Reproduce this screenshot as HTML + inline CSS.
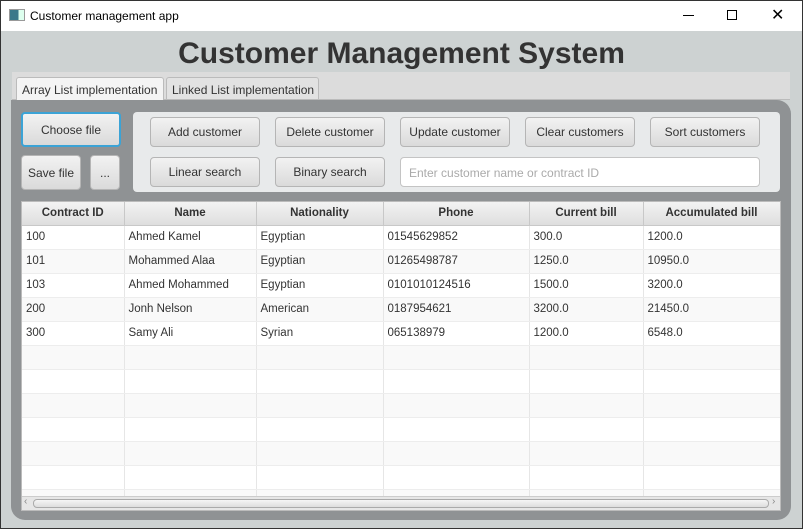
<!DOCTYPE html><html><head><style>
*{margin:0;padding:0;box-sizing:border-box}
body{width:803px;height:529px;overflow:hidden;font-family:"Liberation Sans",sans-serif;font-size:12px;color:#333;background:#cdd2d2;position:relative}
.abs{position:absolute}
.tb{left:0;top:0;width:803px;height:31px;background:#fff}
.btn{position:absolute;border:1px solid #b5b5b5;border-radius:4px;background:linear-gradient(#f2f2f2,#dadada);text-align:center;font-size:12px;color:#333;display:flex;align-items:center;justify-content:center;white-space:nowrap}
table{border-collapse:collapse;table-layout:fixed}
td,th{height:24px;border-right:1px solid #e6e6e6;padding:0 4px;text-align:left;font-weight:normal;font-size:11.5px;white-space:nowrap;overflow:hidden}
th{height:23px;text-align:center;font-weight:bold;background:linear-gradient(#f3f3f3,#dedede);border-right:1px solid #c8c8c8;border-bottom:1px solid #c8c8c8}
tr:nth-child(odd) td{background:#f9f9f9}
tr:nth-child(even) td{background:#fff}
td{border-bottom:1px solid #ededed}
</style></head><body>
<div class="abs tb"></div>
<div class="abs" style="left:0;top:0;width:803px;height:529px;border:1px solid #333;z-index:5;pointer-events:none"></div>
<div class="abs" style="left:9px;top:9px;width:16px;height:12px;border:1px solid #999;background:linear-gradient(90deg,#3a7a8a 0 60%,#dfe 60%)"></div>
<div class="abs" style="left:30px;top:9px;font-size:12px;color:#000">Customer management app</div>
<div class="abs" style="left:683px;top:15px;width:11px;height:1px;background:#000"></div>
<div class="abs" style="left:727px;top:10px;width:10px;height:10px;border:1px solid #000"></div>
<div class="abs" style="left:771px;top:5px;font-size:16px;color:#000">✕</div>
<div class="abs" style="left:0;width:803px;top:37px;text-align:center;font-size:30px;font-weight:bold;color:#333">Customer Management System</div>
<div class="abs" style="left:12px;top:72px;width:778px;height:28px;background:#dcdcdc;border-bottom:1px solid #bbb"></div>
<div class="abs" style="left:16px;top:77px;width:148px;height:24px;background:#f4f4f4;border:1px solid #bbb;border-bottom:none;border-radius:3px 3px 0 0;padding:5px 5px;font-size:12px;white-space:nowrap">Array List implementation</div>
<div class="abs" style="left:166px;top:77px;width:153px;height:23px;background:#e2e2e2;border:1px solid #bbb;border-radius:3px 3px 0 0;padding:5px 5px;font-size:12px;white-space:nowrap">Linked List implementation</div>
<div class="abs" style="left:11px;top:100px;width:780px;height:420px;background:#8f9294;border-radius:0 14px 14px 14px"></div>
<div class="btn" style="left:21px;top:112px;width:100px;height:35px;border:2px solid #3ba3d6">Choose file</div>
<div class="btn" style="left:21px;top:155px;width:60px;height:35px">Save file</div>
<div class="btn" style="left:90px;top:155px;width:30px;height:35px">...</div>
<div class="abs" style="left:133px;top:112px;width:647px;height:80px;background:#e8eaeb;border-radius:4px"></div>
<div class="btn" style="left:150px;top:117px;width:110px;height:30px">Add customer</div>
<div class="btn" style="left:275px;top:117px;width:110px;height:30px">Delete customer</div>
<div class="btn" style="left:400px;top:117px;width:110px;height:30px">Update customer</div>
<div class="btn" style="left:525px;top:117px;width:110px;height:30px">Clear customers</div>
<div class="btn" style="left:650px;top:117px;width:110px;height:30px">Sort customers</div>
<div class="btn" style="left:150px;top:157px;width:110px;height:30px">Linear search</div>
<div class="btn" style="left:275px;top:157px;width:110px;height:30px">Binary search</div>
<div class="abs" style="left:400px;top:157px;width:360px;height:30px;background:#fff;border:1px solid #c4c4c4;border-radius:4px;padding:8px 8px;color:#aaa;font-size:12px">Enter customer name or contract ID</div>
<div class="abs" style="left:21px;top:201px;width:760px;height:310px;background:#fff;overflow:hidden;border:1px solid #bbb">
<table style="width:758px">
<colgroup><col style="width:102px"><col style="width:132px"><col style="width:127px"><col style="width:146px"><col style="width:114px"><col style="width:137px"></colgroup>
<tr><th>Contract ID</th><th>Name</th><th>Nationality</th><th>Phone</th><th>Current bill</th><th>Accumulated bill</th></tr>
<tr><td>100</td><td>Ahmed Kamel</td><td>Egyptian</td><td>01545629852</td><td>300.0</td><td>1200.0</td></tr>
<tr><td>101</td><td>Mohammed Alaa</td><td>Egyptian</td><td>01265498787</td><td>1250.0</td><td>10950.0</td></tr>
<tr><td>103</td><td>Ahmed Mohammed</td><td>Egyptian</td><td>0101010124516</td><td>1500.0</td><td>3200.0</td></tr>
<tr><td>200</td><td>Jonh Nelson</td><td>American</td><td>0187954621</td><td>3200.0</td><td>21450.0</td></tr>
<tr><td>300</td><td>Samy Ali</td><td>Syrian</td><td>065138979</td><td>1200.0</td><td>6548.0</td></tr>
<tr><td></td><td></td><td></td><td></td><td></td><td></td></tr>
<tr><td></td><td></td><td></td><td></td><td></td><td></td></tr>
<tr><td></td><td></td><td></td><td></td><td></td><td></td></tr>
<tr><td></td><td></td><td></td><td></td><td></td><td></td></tr>
<tr><td></td><td></td><td></td><td></td><td></td><td></td></tr>
<tr><td></td><td></td><td></td><td></td><td></td><td></td></tr>
<tr><td></td><td></td><td></td><td></td><td></td><td></td></tr>
</table>
<div class="abs" style="left:0;top:294px;width:758px;height:14px;background:#e6e6e6;border-top:1px solid #ccc"></div>
<div class="abs" style="left:11px;top:297px;width:736px;height:9px;border:1px solid #aaa;border-radius:4px;background:linear-gradient(#f5f5f5,#ddd)"></div>
<div class="abs" style="left:2px;top:294px;font-size:10px;color:#888">‹</div>
<div class="abs" style="left:750px;top:294px;font-size:10px;color:#888">›</div>
</div>
</body></html>
